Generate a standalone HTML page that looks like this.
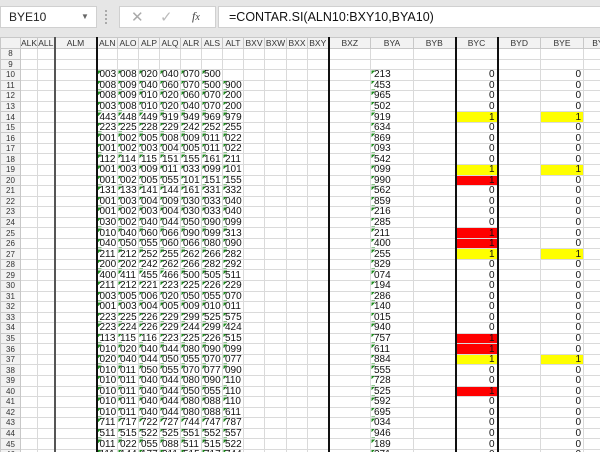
<!DOCTYPE html>
<html><head><meta charset="utf-8"><style>
*{margin:0;padding:0;box-sizing:border-box}
body{width:600px;height:452px;overflow:hidden;background:#e6e6e6;font-family:"Liberation Sans",sans-serif;position:relative}
.box{position:absolute;top:6px;height:22px;background:#fff;border:1px solid #d0d0d0}
#grid{position:absolute;left:0;top:37px;background:#fff;width:600px;height:415px;overflow:hidden}
table{border-collapse:collapse;table-layout:fixed;width:617px}
td,th{border:1px solid #dadada;height:10.55px;padding:0;font-size:10px;line-height:9px;white-space:nowrap;overflow:hidden;font-weight:normal;font-family:"Liberation Sans Narrow","Liberation Sans",sans-serif;color:#111}
tr.h th{height:11px;background:#f2f2f2;color:#333;font-size:8.5px;border-color:#c8c8c8;font-family:"Liberation Sans",sans-serif}
tbody th{background:#f2f2f2;color:#333;font-size:8px;border-color:#c8c8c8;text-align:center;font-family:"Liberation Sans",sans-serif}
.t{background:linear-gradient(135deg,#1f8c1f 2.5px,transparent 2.5px);padding-left:2px;text-align:left}
.a{padding-left:3px}
.n{text-align:right;padding-right:2px}
.y{background:#ffff00}.r{background:#ff0000}
</style></head><body>
<div class="box" style="left:0;width:97px"><span style="position:absolute;left:8px;top:3px;font-size:12px;color:#222">BYE10</span><span style="position:absolute;left:80px;top:5px;font-size:8px;color:#666">▼</span></div>
<div style="position:absolute;left:105px;top:10px;width:2px;height:14px;border-left:2px dotted #aaa"></div>
<div class="box" style="left:119px;width:97px"><span style="position:absolute;left:11px;top:1px;font-size:15px;color:#aaa">✕</span><span style="position:absolute;left:40px;top:1px;font-size:15px;color:#bbb">✓</span><span style="position:absolute;left:72px;top:2px;font-size:12px;font-style:italic;font-family:'Liberation Serif',serif;color:#444">f<small>x</small></span></div>
<div class="box" style="left:218px;width:390px"><span style="position:absolute;left:10px;top:3px;font-size:12.5px;color:#111">=CONTAR.SI(ALN10:BXY10,BYA10)</span></div>
<div id="grid"><table>
<colgroup><col style="width:20px"><col style="width:17px"><col style="width:17px;border-right:2px solid #555"><col style="width:42px;border-right:2px solid #111"><col style="width:21px"><col style="width:21px"><col style="width:21px"><col style="width:21px"><col style="width:21px"><col style="width:21px"><col style="width:21px"><col style="width:21px"><col style="width:22px"><col style="width:21px"><col style="width:21px;border-right:2px solid #111"><col style="width:42px"><col style="width:43px"><col style="width:42px;border-right:2px solid #111"><col style="width:42px;border-right:2px solid #111"><col style="width:43px"><col style="width:43px"><col style="width:34px"></colgroup>
<tr class="h"><th></th><th>ALK</th><th>ALL</th><th>ALM</th><th>ALN</th><th>ALO</th><th>ALP</th><th>ALQ</th><th>ALR</th><th>ALS</th><th>ALT</th><th>BXV</th><th>BXW</th><th>BXX</th><th>BXY</th><th>BXZ</th><th>BYA</th><th>BYB</th><th>BYC</th><th>BYD</th><th>BYE</th><th>BYF</th></tr>
<tbody>
<tr><th>8</th><td></td><td></td><td></td><td></td><td></td><td></td><td></td><td></td><td></td><td></td><td></td><td></td><td></td><td></td><td></td><td></td><td></td><td></td><td></td><td></td><td></td></tr>
<tr><th>9</th><td></td><td></td><td></td><td></td><td></td><td></td><td></td><td></td><td></td><td></td><td></td><td></td><td></td><td></td><td></td><td></td><td></td><td></td><td></td><td></td><td></td></tr>
<tr><th>10</th><td></td><td></td><td></td><td class=t>003</td><td class=t>008</td><td class=t>020</td><td class=t>040</td><td class=t>070</td><td class=t>500</td><td></td><td></td><td></td><td></td><td></td><td></td><td class="t a">213</td><td></td><td class=n>0</td><td></td><td class=n>0</td><td></td></tr>
<tr><th>11</th><td></td><td></td><td></td><td class=t>008</td><td class=t>009</td><td class=t>040</td><td class=t>060</td><td class=t>070</td><td class=t>500</td><td class=t>900</td><td></td><td></td><td></td><td></td><td></td><td class="t a">453</td><td></td><td class=n>0</td><td></td><td class=n>0</td><td></td></tr>
<tr><th>12</th><td></td><td></td><td></td><td class=t>008</td><td class=t>009</td><td class=t>010</td><td class=t>020</td><td class=t>060</td><td class=t>070</td><td class=t>200</td><td></td><td></td><td></td><td></td><td></td><td class="t a">965</td><td></td><td class=n>0</td><td></td><td class=n>0</td><td></td></tr>
<tr><th>13</th><td></td><td></td><td></td><td class=t>003</td><td class=t>008</td><td class=t>010</td><td class=t>020</td><td class=t>040</td><td class=t>070</td><td class=t>200</td><td></td><td></td><td></td><td></td><td></td><td class="t a">502</td><td></td><td class=n>0</td><td></td><td class=n>0</td><td></td></tr>
<tr><th>14</th><td></td><td></td><td></td><td class=t>443</td><td class=t>448</td><td class=t>449</td><td class=t>919</td><td class=t>949</td><td class=t>969</td><td class=t>979</td><td></td><td></td><td></td><td></td><td></td><td class="t a">919</td><td></td><td class="n y">1</td><td></td><td class="n y">1</td><td></td></tr>
<tr><th>15</th><td></td><td></td><td></td><td class=t>223</td><td class=t>225</td><td class=t>228</td><td class=t>229</td><td class=t>242</td><td class=t>252</td><td class=t>255</td><td></td><td></td><td></td><td></td><td></td><td class="t a">634</td><td></td><td class=n>0</td><td></td><td class=n>0</td><td></td></tr>
<tr><th>16</th><td></td><td></td><td></td><td class=t>001</td><td class=t>002</td><td class=t>005</td><td class=t>008</td><td class=t>009</td><td class=t>011</td><td class=t>022</td><td></td><td></td><td></td><td></td><td></td><td class="t a">869</td><td></td><td class=n>0</td><td></td><td class=n>0</td><td></td></tr>
<tr><th>17</th><td></td><td></td><td></td><td class=t>001</td><td class=t>002</td><td class=t>003</td><td class=t>004</td><td class=t>005</td><td class=t>011</td><td class=t>022</td><td></td><td></td><td></td><td></td><td></td><td class="t a">093</td><td></td><td class=n>0</td><td></td><td class=n>0</td><td></td></tr>
<tr><th>18</th><td></td><td></td><td></td><td class=t>112</td><td class=t>114</td><td class=t>115</td><td class=t>151</td><td class=t>155</td><td class=t>161</td><td class=t>211</td><td></td><td></td><td></td><td></td><td></td><td class="t a">542</td><td></td><td class=n>0</td><td></td><td class=n>0</td><td></td></tr>
<tr><th>19</th><td></td><td></td><td></td><td class=t>001</td><td class=t>003</td><td class=t>009</td><td class=t>011</td><td class=t>033</td><td class=t>099</td><td class=t>101</td><td></td><td></td><td></td><td></td><td></td><td class="t a">099</td><td></td><td class="n y">1</td><td></td><td class="n y">1</td><td></td></tr>
<tr><th>20</th><td></td><td></td><td></td><td class=t>001</td><td class=t>002</td><td class=t>005</td><td class=t>055</td><td class=t>101</td><td class=t>151</td><td class=t>155</td><td></td><td></td><td></td><td></td><td></td><td class="t a">990</td><td></td><td class="n r">1</td><td></td><td class=n>0</td><td></td></tr>
<tr><th>21</th><td></td><td></td><td></td><td class=t>131</td><td class=t>133</td><td class=t>141</td><td class=t>144</td><td class=t>161</td><td class=t>331</td><td class=t>332</td><td></td><td></td><td></td><td></td><td></td><td class="t a">562</td><td></td><td class=n>0</td><td></td><td class=n>0</td><td></td></tr>
<tr><th>22</th><td></td><td></td><td></td><td class=t>001</td><td class=t>003</td><td class=t>004</td><td class=t>009</td><td class=t>030</td><td class=t>033</td><td class=t>040</td><td></td><td></td><td></td><td></td><td></td><td class="t a">859</td><td></td><td class=n>0</td><td></td><td class=n>0</td><td></td></tr>
<tr><th>23</th><td></td><td></td><td></td><td class=t>001</td><td class=t>002</td><td class=t>003</td><td class=t>004</td><td class=t>030</td><td class=t>033</td><td class=t>040</td><td></td><td></td><td></td><td></td><td></td><td class="t a">216</td><td></td><td class=n>0</td><td></td><td class=n>0</td><td></td></tr>
<tr><th>24</th><td></td><td></td><td></td><td class=t>030</td><td class=t>002</td><td class=t>040</td><td class=t>044</td><td class=t>050</td><td class=t>090</td><td class=t>099</td><td></td><td></td><td></td><td></td><td></td><td class="t a">285</td><td></td><td class=n>0</td><td></td><td class=n>0</td><td></td></tr>
<tr><th>25</th><td></td><td></td><td></td><td class=t>010</td><td class=t>040</td><td class=t>060</td><td class=t>066</td><td class=t>090</td><td class=t>099</td><td class=t>313</td><td></td><td></td><td></td><td></td><td></td><td class="t a">211</td><td></td><td class="n r">1</td><td></td><td class=n>0</td><td></td></tr>
<tr><th>26</th><td></td><td></td><td></td><td class=t>040</td><td class=t>050</td><td class=t>055</td><td class=t>060</td><td class=t>066</td><td class=t>080</td><td class=t>090</td><td></td><td></td><td></td><td></td><td></td><td class="t a">400</td><td></td><td class="n r">1</td><td></td><td class=n>0</td><td></td></tr>
<tr><th>27</th><td></td><td></td><td></td><td class=t>211</td><td class=t>212</td><td class=t>252</td><td class=t>255</td><td class=t>262</td><td class=t>266</td><td class=t>282</td><td></td><td></td><td></td><td></td><td></td><td class="t a">255</td><td></td><td class="n y">1</td><td></td><td class="n y">1</td><td></td></tr>
<tr><th>28</th><td></td><td></td><td></td><td class=t>200</td><td class=t>202</td><td class=t>242</td><td class=t>262</td><td class=t>266</td><td class=t>282</td><td class=t>292</td><td></td><td></td><td></td><td></td><td></td><td class="t a">829</td><td></td><td class=n>0</td><td></td><td class=n>0</td><td></td></tr>
<tr><th>29</th><td></td><td></td><td></td><td class=t>400</td><td class=t>411</td><td class=t>455</td><td class=t>466</td><td class=t>500</td><td class=t>505</td><td class=t>511</td><td></td><td></td><td></td><td></td><td></td><td class="t a">074</td><td></td><td class=n>0</td><td></td><td class=n>0</td><td></td></tr>
<tr><th>30</th><td></td><td></td><td></td><td class=t>211</td><td class=t>212</td><td class=t>221</td><td class=t>223</td><td class=t>225</td><td class=t>226</td><td class=t>229</td><td></td><td></td><td></td><td></td><td></td><td class="t a">194</td><td></td><td class=n>0</td><td></td><td class=n>0</td><td></td></tr>
<tr><th>31</th><td></td><td></td><td></td><td class=t>003</td><td class=t>005</td><td class=t>006</td><td class=t>020</td><td class=t>050</td><td class=t>055</td><td class=t>070</td><td></td><td></td><td></td><td></td><td></td><td class="t a">286</td><td></td><td class=n>0</td><td></td><td class=n>0</td><td></td></tr>
<tr><th>32</th><td></td><td></td><td></td><td class=t>001</td><td class=t>003</td><td class=t>004</td><td class=t>005</td><td class=t>009</td><td class=t>010</td><td class=t>011</td><td></td><td></td><td></td><td></td><td></td><td class="t a">140</td><td></td><td class=n>0</td><td></td><td class=n>0</td><td></td></tr>
<tr><th>33</th><td></td><td></td><td></td><td class=t>223</td><td class=t>225</td><td class=t>226</td><td class=t>229</td><td class=t>299</td><td class=t>525</td><td class=t>575</td><td></td><td></td><td></td><td></td><td></td><td class="t a">015</td><td></td><td class=n>0</td><td></td><td class=n>0</td><td></td></tr>
<tr><th>34</th><td></td><td></td><td></td><td class=t>223</td><td class=t>224</td><td class=t>226</td><td class=t>229</td><td class=t>244</td><td class=t>299</td><td class=t>424</td><td></td><td></td><td></td><td></td><td></td><td class="t a">940</td><td></td><td class=n>0</td><td></td><td class=n>0</td><td></td></tr>
<tr><th>35</th><td></td><td></td><td></td><td class=t>113</td><td class=t>115</td><td class=t>116</td><td class=t>223</td><td class=t>225</td><td class=t>226</td><td class=t>515</td><td></td><td></td><td></td><td></td><td></td><td class="t a">757</td><td></td><td class="n r">1</td><td></td><td class=n>0</td><td></td></tr>
<tr><th>36</th><td></td><td></td><td></td><td class=t>010</td><td class=t>020</td><td class=t>040</td><td class=t>044</td><td class=t>080</td><td class=t>090</td><td class=t>099</td><td></td><td></td><td></td><td></td><td></td><td class="t a">611</td><td></td><td class="n r">1</td><td></td><td class=n>0</td><td></td></tr>
<tr><th>37</th><td></td><td></td><td></td><td class=t>020</td><td class=t>040</td><td class=t>044</td><td class=t>050</td><td class=t>055</td><td class=t>070</td><td class=t>077</td><td></td><td></td><td></td><td></td><td></td><td class="t a">884</td><td></td><td class="n y">1</td><td></td><td class="n y">1</td><td></td></tr>
<tr><th>38</th><td></td><td></td><td></td><td class=t>010</td><td class=t>011</td><td class=t>050</td><td class=t>055</td><td class=t>070</td><td class=t>077</td><td class=t>090</td><td></td><td></td><td></td><td></td><td></td><td class="t a">555</td><td></td><td class=n>0</td><td></td><td class=n>0</td><td></td></tr>
<tr><th>39</th><td></td><td></td><td></td><td class=t>010</td><td class=t>011</td><td class=t>040</td><td class=t>044</td><td class=t>080</td><td class=t>090</td><td class=t>110</td><td></td><td></td><td></td><td></td><td></td><td class="t a">728</td><td></td><td class=n>0</td><td></td><td class=n>0</td><td></td></tr>
<tr><th>40</th><td></td><td></td><td></td><td class=t>010</td><td class=t>011</td><td class=t>040</td><td class=t>044</td><td class=t>050</td><td class=t>055</td><td class=t>110</td><td></td><td></td><td></td><td></td><td></td><td class="t a">525</td><td></td><td class="n r">1</td><td></td><td class=n>0</td><td></td></tr>
<tr><th>41</th><td></td><td></td><td></td><td class=t>010</td><td class=t>011</td><td class=t>040</td><td class=t>044</td><td class=t>080</td><td class=t>088</td><td class=t>110</td><td></td><td></td><td></td><td></td><td></td><td class="t a">592</td><td></td><td class=n>0</td><td></td><td class=n>0</td><td></td></tr>
<tr><th>42</th><td></td><td></td><td></td><td class=t>010</td><td class=t>011</td><td class=t>040</td><td class=t>044</td><td class=t>080</td><td class=t>088</td><td class=t>611</td><td></td><td></td><td></td><td></td><td></td><td class="t a">695</td><td></td><td class=n>0</td><td></td><td class=n>0</td><td></td></tr>
<tr><th>43</th><td></td><td></td><td></td><td class=t>711</td><td class=t>717</td><td class=t>722</td><td class=t>727</td><td class=t>744</td><td class=t>747</td><td class=t>787</td><td></td><td></td><td></td><td></td><td></td><td class="t a">034</td><td></td><td class=n>0</td><td></td><td class=n>0</td><td></td></tr>
<tr><th>44</th><td></td><td></td><td></td><td class=t>511</td><td class=t>515</td><td class=t>522</td><td class=t>525</td><td class=t>551</td><td class=t>552</td><td class=t>557</td><td></td><td></td><td></td><td></td><td></td><td class="t a">946</td><td></td><td class=n>0</td><td></td><td class=n>0</td><td></td></tr>
<tr><th>45</th><td></td><td></td><td></td><td class=t>011</td><td class=t>022</td><td class=t>055</td><td class=t>088</td><td class=t>511</td><td class=t>515</td><td class=t>522</td><td></td><td></td><td></td><td></td><td></td><td class="t a">189</td><td></td><td class=n>0</td><td></td><td class=n>0</td><td></td></tr>
<tr><th>46</th><td></td><td></td><td></td><td class=t>111</td><td class=t>144</td><td class=t>177</td><td class=t>211</td><td class=t>515</td><td class=t>717</td><td class=t>744</td><td></td><td></td><td></td><td></td><td></td><td class="t a">271</td><td></td><td class=n>0</td><td></td><td class=n>0</td><td></td></tr>
</tbody></table></div>
</body></html>
